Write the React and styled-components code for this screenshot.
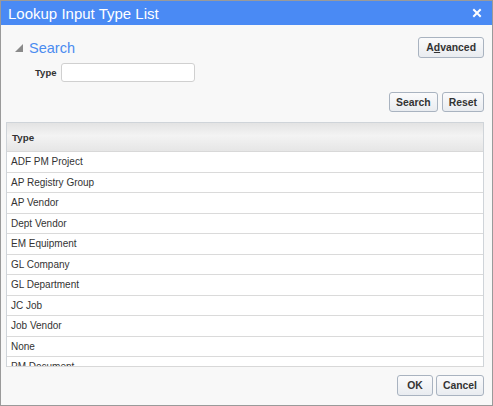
import React from "react";
import styled, { createGlobalStyle } from "styled-components";

const Global = createGlobalStyle`
  html, body { margin: 0; padding: 0; background: #fff; }
  body { font-family: "Liberation Sans", Arial, sans-serif; }
  * { box-sizing: border-box; }
`;

const Window = styled.div`
  width: 493px;
  height: 406px;
  border: 1px solid #9a9a9a;
  background: #f8f8f8;
  display: flex;
  flex-direction: column;
  overflow: hidden;
`;

const TitleBar = styled.div`
  height: 24px;
  flex: none;
  background: #4a8af4;
  color: #fff;
  font-size: 15px;
  display: flex;
  align-items: center;
  justify-content: space-between;
  padding: 0 10px 0 7px;
`;

const CloseBtn = styled.button`
  border: 0;
  background: transparent;
  padding: 0;
  width: 10px;
  height: 10px;
  display: flex;
  cursor: pointer;
`;

const Body = styled.div`
  flex: 1;
  display: flex;
  flex-direction: column;
  padding: 12px 8px 0 5px;
  min-height: 0;
`;

const SearchHead = styled.div`
  display: flex;
  align-items: center;
  justify-content: space-between;
  height: 21px;
`;

const Disclosure = styled.div`
  display: flex;
  align-items: center;
  gap: 6px;
  padding-left: 9px;
  color: #4b8cf0;
  font-size: 14.5px;
`;

const Button = styled.button`
  font-family: "Liberation Sans", Arial, sans-serif;
  font-size: 10.4px;
  font-weight: bold;
  color: #333;
  height: ${(p) => p.$h || 21}px;
  min-width: ${(p) => p.$min || 0}px;
  padding: 0 ${(p) => p.$pad || 6}px;
  border: 1px solid #a9b3c0;
  border-radius: 3px;
  background: linear-gradient(#fbfbfc, #e9ecf0);
  cursor: pointer;
  u { text-decoration: underline; }
`;

const FieldRow = styled.div`
  display: flex;
  align-items: center;
  gap: 5px;
  margin-top: 5px;
  padding-left: 29px;
`;

const Label = styled.label`
  font-size: 9.5px;
  font-weight: bold;
  color: #333;
`;

const Input = styled.input`
  width: 134px;
  height: 19px;
  border: 1px solid #d0d0d0;
  border-radius: 3px;
  background: #fff;
  outline: none;
`;

const ButtonRow = styled.div`
  display: flex;
  justify-content: flex-end;
  gap: 4px;
  margin-top: ${(p) => p.$top || 0}px;
`;

const Table = styled.div`
  margin-top: 10px;
  border: 1px solid #cfd4d9;
  border-bottom: 0;
  height: 245px;
  overflow: hidden;
  background: #fff;
  display: flex;
  flex-direction: column;
`;

const HeaderCell = styled.div`
  height: 29px;
  flex: none;
  display: flex;
  align-items: center;
  padding-left: 5px;
  font-size: 9.8px;
  font-weight: bold;
  color: #333;
  background: linear-gradient(#e3e3e3, #f3f3f3 45%, #e6e6e6);
  border-bottom: 1px solid #d8d8d8;
`;

const Rows = styled.div`
  flex: 1;
  overflow: hidden;
  border-bottom: 1px solid #d8d8d8;
`;

const Row = styled.div`
  height: 20.5px;
  flex: none;
  display: flex;
  align-items: center;
  padding-left: 4px;
  font-size: 10px;
  color: #333;
  border-bottom: 1px solid #dadada;
`;

const Footer = styled.div`
  display: flex;
  justify-content: flex-end;
  gap: 3px;
  padding: 7px 8px 9px 0;
`;

const rows = [
  "ADF PM Project",
  "AP Registry Group",
  "AP Vendor",
  "Dept Vendor",
  "EM Equipment",
  "GL Company",
  "GL Department",
  "JC Job",
  "Job Vendor",
  "None",
  "PM Document",
];

export default function App() {
  return (
    <>
      <Global />
      <Window>
        <TitleBar>
          <span>Lookup Input Type List</span>
          <CloseBtn aria-label="Close">
            <svg width="10" height="10" viewBox="0 0 10 10">
              <path d="M2 2L8 8M8 2L2 8" stroke="#fff" strokeWidth="2" strokeLinecap="square" />
            </svg>
          </CloseBtn>
        </TitleBar>
        <Body>
          <SearchHead>
            <Disclosure>
              <svg width="8" height="8" viewBox="0 0 8 8">
                <polygon points="8,0 8,8 0,8" fill="#8a8a8a" />
              </svg>
              <span>Search</span>
            </Disclosure>
            <Button $pad={7}>
              A<u>d</u>vanced
            </Button>
          </SearchHead>
          <FieldRow>
            <Label>Type</Label>
            <Input />
          </FieldRow>
          <ButtonRow $top={10}>
            <Button $h={20}>Search</Button>
            <Button $h={20}>Reset</Button>
          </ButtonRow>
          <Table>
            <HeaderCell>Type</HeaderCell>
            <Rows>
              {rows.map((r) => (
                <Row key={r}>{r}</Row>
              ))}
            </Rows>
          </Table>
        </Body>
        <Footer>
          <Button $min={36}>OK</Button>
          <Button>Cancel</Button>
        </Footer>
      </Window>
    </>
  );
}
